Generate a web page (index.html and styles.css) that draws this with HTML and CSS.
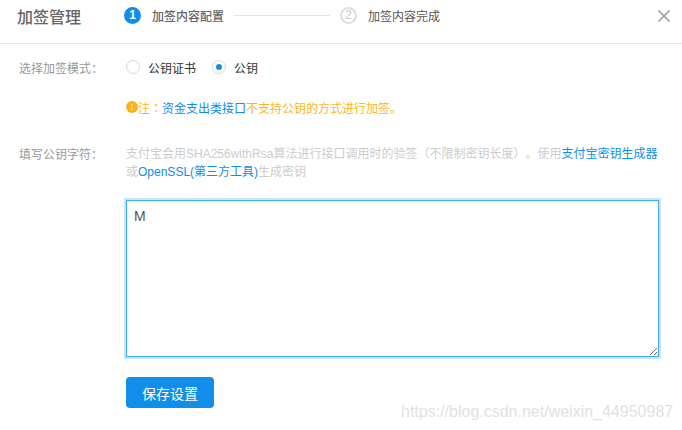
FILE: index.html
```html
<!DOCTYPE html>
<html lang="zh-CN">
<head>
<meta charset="utf-8">
<title>加签管理</title>
<link rel="stylesheet" href="styles.css">
</head>
<body>
<div class="dialog">
    <div class="head">
        <h2 class="head-title">加签管理</h2>
        <div class="steps">
            <span class="step-num step-on">1</span>
            <span class="step-text step-text-on">加签内容配置</span>
            <span class="step-line"></span>
            <span class="step-num">2</span>
            <span class="step-text">加签内容完成</span>
        </div>
        <svg class="close" width="12" height="12" viewBox="0 0 12 12">
            <path d="M0.5 0.5L11.5 11.5M11.5 0.5L0.5 11.5" stroke="#999" stroke-width="1.5" fill="none"/>
        </svg>
    </div>
    <div class="body">
        <div class="row row-mode">
            <label class="title">选择加签模式<span class="colon">：</span></label>
            <div class="radios">
                <span class="radio"></span><span class="radio-text">公钥证书</span>
                <span class="radio radio-on"></span><span class="radio-text">公钥</span>
            </div>
        </div>
        <p class="note">
            <span class="note-icon">!</span>注<span class="colon">：</span><a class="link">资金支出类接口</a>不支持公钥的方式进行加签。
        </p>
        <div class="row row-key">
            <label class="title">填写公钥字符<span class="colon">：</span></label>
            <div class="key-main">
                <p class="desc">支付宝会用SHA256withRsa算法进行接口调用时的验签（不限制密钥长度）。使用<a class="link">支付宝密钥生成器</a>或<a class="link">OpenSSL(第三方工具)</a>生成密钥</p>
                <textarea class="key-input">M</textarea>
                <button class="save" type="button">保存设置</button>
            </div>
        </div>
    </div>
    <div class="watermark">https://blog.csdn.net/weixin_44950987</div>
</div>
</body>
</html>
```

FILE: styles.css
```css
* {
    box-sizing: border-box;
}

html, body {
    margin: 0;
    padding: 0;
    background: #fff;
}

body {
    font-family: "Liberation Sans", "Noto Sans CJK SC", sans-serif;
    font-size: 12px;
    color: #333;
    text-spacing-trim: space-all;
}

.dialog {
    position: relative;
    width: 682px;
    height: 430px;
    overflow: hidden;
}

.head {
    display: flex;
    align-items: center;
    height: 44px;
    padding: 0 12px 12px 17px;
    border-bottom: 1px solid #e8e8e8;
}

.head-title {
    margin: 0;
    width: 107px;
    font-size: 16px;
    font-weight: 500;
    color: #666;
}

.steps {
    display: flex;
    align-items: center;
    flex: 1;
}

.step-num {
    width: 17px;
    height: 17px;
    border: 2px solid #ddd;
    border-radius: 50%;
    font-size: 12px;
    line-height: 13px;
    text-align: center;
    color: #ccc;
}

.step-on {
    border-color: #108ee9;
    background: #108ee9;
    color: #fff;
    font-weight: bold;
}

.step-text {
    margin-left: 11px;
    font-size: 12px;
    color: #555;
}

.step-text-on {
    color: #666;
    font-weight: 500;
}

.step-line {
    width: 96px;
    height: 1px;
    margin: 0 10px 0 10px;
    background: #e4e4e4;
}

.body {
    padding: 0 22px 0 19px;
}

.row {
    display: flex;
}

.title {
    width: 107px;
    flex: none;
    color: #999;
}

.colon {
    font-family: "Noto Sans CJK TC", sans-serif;
}

.row-mode {
    align-items: center;
    margin-top: 15px;
    height: 16px;
}

.radios {
    display: flex;
    align-items: center;
}

.radio {
    position: relative;
    width: 14px;
    height: 14px;
    border: 1px solid #d9d9d9;
    border-radius: 50%;
}

.radio-on::after {
    content: "";
    position: absolute;
    left: 3px;
    top: 3px;
    width: 6px;
    height: 6px;
    border-radius: 50%;
    background: #108ee9;
}

.radio-text {
    margin: 0 16px 0 8px;
    color: #333;
}

.note {
    display: flex;
    align-items: center;
    margin: 24px 0 0 107px;
    height: 16px;
    color: #ffb522;
}

.note-icon {
    width: 12px;
    height: 12px;
    border-radius: 50%;
    background: #ffb11b;
    color: #fff;
    font-size: 9px;
    line-height: 12px;
    text-align: center;
}

.link {
    color: #108ee9;
}

.row-key {
    margin-top: 30px;
}

.key-main {
    flex: 1;
}

.desc {
    margin: 0;
    line-height: 18px;
    color: #ccc;
}

.key-input {
    display: block;
    width: 533px;
    height: 157px;
    margin-top: 19px;
    padding: 7px;
    border: 1px solid #3fa9f5;
    box-shadow: 0 0 0 2px #c8e4fb;
    border-radius: 0;
    outline: none;
    font-family: "Liberation Sans", sans-serif;
    font-size: 14px;
    color: #555;
}

.save {
    display: block;
    width: 88px;
    height: 31px;
    margin-top: 20px;
    border: 0;
    border-radius: 4px;
    background: #108ee9;
    color: #fff;
    font-family: inherit;
    font-size: 14px;
}

.watermark {
    position: absolute;
    left: 401px;
    top: 403px;
    font-size: 16px;
    color: #e2e2e2;
}
```
